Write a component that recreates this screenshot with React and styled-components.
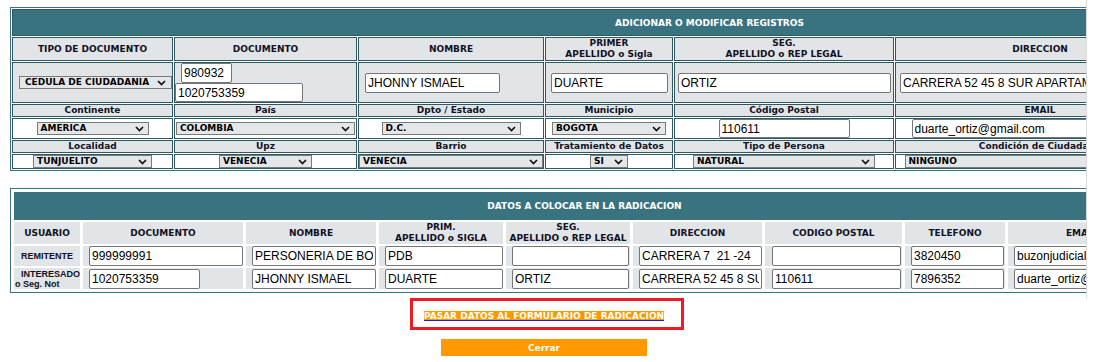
import React from 'react';
import styled, { createGlobalStyle } from 'styled-components';

const TEAL = '#3a7380';
const CELL_BORDER = '#2d5864';
const GRAY = '#e1e5e8';
const INK = '#111122';
const ORANGE = '#ff9900';

const GlobalStyle = createGlobalStyle`
  html, body { margin: 0; padding: 0; background: #fff; }
  body { font-family: "DejaVu Sans", Verdana, sans-serif; font-size: 9px; color: ${INK}; }
  * { box-sizing: border-box; }
`;

const Page = styled.div`
  width: 1094px;
  display: flex;
  flex-direction: column;
  align-items: center;
`;

const Viewport = styled.div`
  align-self: flex-start;
  width: 1087px;
  height: 298px;
  overflow: hidden;
  border-right: 1px solid #d9d9d9;
  padding: 7px 0 0 10px;
  display: flex;
  flex-direction: column;
  align-items: flex-start;
  gap: 17px;
`;

/* ---------- top table ---------- */
const RegistryGrid = styled.div`
  display: grid;
  flex-shrink: 0;
  grid-template-columns: 161px 183px 186px 128px 220px 290px 221px;
  grid-template-rows: 27px 24px 41px 13px 21px 13px 15px;
  gap: 1px;
  padding: 1px;
  border: 1px solid ${TEAL};
  background: #fff;
`;

const GridTitle = styled.div`
  grid-column: 1 / -1;
  background: ${TEAL};
  border: 1px solid ${CELL_BORDER};
  color: #fff;
  font-weight: bold;
  font-size: 9px;
  display: flex;
  align-items: center;
  justify-content: center;
  white-space: nowrap;
`;

const Cell = styled.div`
  border: 1px solid ${CELL_BORDER};
  background: ${p => (p.$white ? '#fff' : GRAY)};
  display: flex;
  align-items: center;
  justify-content: ${p => (p.$start ? 'flex-start' : 'center')};
  padding-left: ${p => p.$pl || 0}px;
  min-width: 0;
  overflow: hidden;
`;

const StackCell = styled(Cell)`
  flex-direction: column;
  align-items: flex-start;
  justify-content: center;
`;

const Label = styled.span`
  font-family: "DejaVu Sans", Verdana, sans-serif;
  font-weight: bold;
  font-size: 9px;
  line-height: 11px;
  text-align: center;
  color: ${INK};
  white-space: nowrap;
`;

const TextInput = styled.input.attrs({ type: 'text', readOnly: true })`
  width: ${p => p.$w}px;
  height: ${p => p.$h || 20}px;
  margin: 0 0 0 ${p => p.$ml || 0}px;
  border: 1px solid #767676;
  border-radius: 2px;
  padding: 1px 2px;
  font-family: "Liberation Sans", Arial, sans-serif;
  font-size: 12px;
  color: #000;
  background: #fff;
  flex-shrink: 0;
  outline: none;
`;

const SelectBox = styled.div`
  width: ${p => (p.$w ? `${p.$w}px` : '100%')};
  height: 13px;
  flex-shrink: 0;
  display: flex;
  align-items: center;
  justify-content: space-between;
  border: 1px solid #7a7a7a;
  background: #e4e7ea;
  padding: 0 ${p => p.$pr ?? 4}px 0 ${p => p.$pl ?? 3}px;
  font-family: "DejaVu Sans", Verdana, sans-serif;
  font-weight: bold;
  font-size: 9px;
  line-height: 11px;
  color: #000;
  white-space: nowrap;
  overflow: hidden;
`;

const Chevron = () => (
  <svg width="9" height="6" viewBox="0 0 9 6" style={{ flexShrink: 0 }}>
    <path d="M1 1 L4.5 4.5 L8 1" fill="none" stroke="#111" strokeWidth="1.7" />
  </svg>
);

const Select = ({ value, w, pl, pr }) => (
  <SelectBox $w={w} $pl={pl} $pr={pr}>
    <span>{value}</span>
    <Chevron />
  </SelectBox>
);

/* ---------- bottom table ---------- */
const RadGrid = styled.div`
  display: grid;
  flex-shrink: 0;
  grid-template-columns: 66px 160px 130px 124px 124px 129px 137px 100px 147px;
  grid-template-rows: 28px 22px 20px 21px;
  column-gap: 3px;
  row-gap: 2px;
  padding: 3px;
  border: 1px solid ${TEAL};
  background: #fff;
`;

const RadTitle = styled.div`
  grid-column: 1 / -1;
  background: ${TEAL};
  color: #fff;
  font-weight: bold;
  font-size: 9px;
  display: flex;
  align-items: center;
  justify-content: center;
  white-space: nowrap;
`;

const RadCell = styled.div`
  background: ${GRAY};
  display: flex;
  align-items: center;
  justify-content: ${p => (p.$start ? 'flex-start' : 'center')};
  padding-left: ${p => p.$pl || 0}px;
  min-width: 0;
`;

const UserLabel = styled.span`
  font-family: "Liberation Sans", Arial, sans-serif;
  font-weight: bold;
  font-size: 9px;
  line-height: 10px;
  color: ${INK};
  white-space: nowrap;
  text-align: ${p => p.$align || 'center'};
  align-self: ${p => (p.$align === 'left' ? 'center' : 'auto')};
  width: ${p => (p.$align === 'left' ? '100%' : 'auto')};
  padding-left: ${p => (p.$align === 'left' ? '1px' : '0')};
`;

const Indent = styled.span`
  padding-left: 6px;
`;

/* ---------- actions ---------- */
const ActionBox = styled.div`
  width: 274px;
  height: 32px;
  border: 3px solid #ed1c24;
  display: flex;
  align-items: center;
  justify-content: center;
  padding-top: 3px;
  padding-right: 6px;
`;

const PassLink = styled.a`
  font-family: "DejaVu Sans", Verdana, sans-serif;
  font-weight: bold;
  font-size: 9px;
  color: #fff;
  background: ${ORANGE};
  text-decoration: underline;
  text-decoration-color: #1a1aff;
  white-space: nowrap;
`;

const CloseButton = styled.button`
  width: 206px;
  height: 17px;
  margin: 9px 6px 0 0;
  border: none;
  background: ${ORANGE};
  color: #fff;
  font-family: "DejaVu Sans", Verdana, sans-serif;
  font-weight: bold;
  font-size: 9px;
  padding: 0;
`;

const twoLine = (a, b) => (
  <>
    {a}
    <br />
    {b}
  </>
);

export default function App() {
  const headers = [
    'TIPO DE DOCUMENTO',
    'DOCUMENTO',
    'NOMBRE',
    twoLine('PRIMER', 'APELLIDO o Sigla'),
    twoLine('SEG.', 'APELLIDO o REP LEGAL'),
    'DIRECCION',
    'TELEFONO',
  ];
  const labels1 = ['Continente', 'País', 'Dpto / Estado', 'Municipio', 'Código Postal', 'EMAIL', 'Celular'];
  const labels2 = [
    'Localidad',
    'Upz',
    'Barrio',
    'Tratamiento de Datos',
    'Tipo de Persona',
    'Condición de Ciudadano',
    'Discapacidad',
  ];

  const radHeaders = [
    'USUARIO',
    'DOCUMENTO',
    'NOMBRE',
    twoLine('PRIM.', 'APELLIDO o SIGLA'),
    twoLine('SEG.', 'APELLIDO o REP LEGAL'),
    'DIRECCION',
    'CODIGO POSTAL',
    'TELEFONO',
    'EMAIL',
  ];

  const remitente = [
    { v: '999999991', w: 154 },
    { v: 'PERSONERIA DE BOGOTA', w: 124 },
    { v: 'PDB', w: 118 },
    { v: '', w: 117 },
    { v: 'CARRERA 7  21 -24', w: 123 },
    { v: '', w: 129, pl: 7 },
    { v: '3820450', w: 93 },
    { v: 'buzonjudicial@personeriabogota.gov.co', w: 140 },
  ];
  const interesado = [
    { v: '1020753359', w: 111 },
    { v: 'JHONNY ISMAEL', w: 124 },
    { v: 'DUARTE', w: 118 },
    { v: 'ORTIZ', w: 117 },
    { v: 'CARRERA 52 45 8 SUR APARTAMENTO 301', w: 123 },
    { v: '110611', w: 129, pl: 7 },
    { v: '7896352', w: 93 },
    { v: 'duarte_ortiz@gmail.com', w: 140 },
  ];

  return (
    <>
      <GlobalStyle />
      <Page>
        <Viewport>
          <RegistryGrid>
            <GridTitle>ADICIONAR O MODIFICAR REGISTROS</GridTitle>

            {headers.map((h, i) => (
              <Cell key={`h${i}`}>
                <Label>{h}</Label>
              </Cell>
            ))}

            <Cell $start $pl={6}>
              <Select value="CEDULA DE CIUDADANIA" w={153} pl={5} pr={5} />
            </Cell>
            <StackCell>
              <TextInput $w={51} $h={20} $ml={6} value="980932" />
              <TextInput $w={128} $h={19} value="1020753359" />
            </StackCell>
            <Cell $start $pl={6}>
              <TextInput $w={135} value="JHONNY ISMAEL" />
            </Cell>
            <Cell $start $pl={5}>
              <TextInput $w={117} value="DUARTE" />
            </Cell>
            <Cell $start $pl={3}>
              <TextInput $w={213} value="ORTIZ" />
            </Cell>
            <Cell $start $pl={4}>
              <TextInput $w={280} value="CARRERA 52 45 8 SUR APARTAMENTO 301" />
            </Cell>
            <Cell $start $pl={4}>
              <TextInput $w={150} value="7896352" />
            </Cell>

            {labels1.map((l, i) => (
              <Cell key={`l1${i}`}>
                <Label>{l}</Label>
              </Cell>
            ))}

            <Cell $white>
              <Select value="AMERICA" w={112} />
            </Cell>
            <Cell $white>
              <Select value="COLOMBIA" w={179} />
            </Cell>
            <Cell $white>
              <Select value="D.C." w={139} />
            </Cell>
            <Cell $white>
              <Select value="BOGOTA" w={114} />
            </Cell>
            <Cell $white>
              <TextInput $w={131} $h={19} value="110611" />
            </Cell>
            <Cell $white>
              <TextInput $w={257} $h={19} value="duarte_ortiz@gmail.com" />
            </Cell>
            <Cell $white>
              <TextInput $w={150} $h={19} value="3115550000" />
            </Cell>

            {labels2.map((l, i) => (
              <Cell key={`l2${i}`}>
                <Label>{l}</Label>
              </Cell>
            ))}

            <Cell $white>
              <Select value="TUNJUELITO" w={119} />
            </Cell>
            <Cell $white>
              <Select value="VENECIA" w={93} />
            </Cell>
            <Cell $white>
              <Select value="VENECIA" />
            </Cell>
            <Cell $white>
              <Select value="SI" w={38} />
            </Cell>
            <Cell $white>
              <Select value="NATURAL" w={182} />
            </Cell>
            <Cell $white>
              <Select value="NINGUNO" w={271} />
            </Cell>
            <Cell $white>
              <Select value="NINGUNA" w={150} />
            </Cell>
          </RegistryGrid>

          <RadGrid>
            <RadTitle>DATOS A COLOCAR EN LA RADICACION</RadTitle>
            {radHeaders.map((h, i) => (
              <RadCell key={`rh${i}`}>
                <Label>{h}</Label>
              </RadCell>
            ))}

            <RadCell>
              <UserLabel>REMITENTE</UserLabel>
            </RadCell>
            {remitente.map((c, i) => (
              <RadCell key={`r${i}`} $start $pl={c.pl || 6}>
                <TextInput $w={c.w} value={c.v} />
              </RadCell>
            ))}

            <RadCell $start>
              <UserLabel $align="left">
                <Indent>INTERESADO</Indent>
                <br />o Seg. Not
              </UserLabel>
            </RadCell>
            {interesado.map((c, i) => (
              <RadCell key={`i${i}`} $start $pl={c.pl || 6}>
                <TextInput $w={c.w} value={c.v} />
              </RadCell>
            ))}
          </RadGrid>
        </Viewport>

        <ActionBox>
          <PassLink href="#">PASAR DATOS AL FORMULARIO DE RADICACION</PassLink>
        </ActionBox>
        <CloseButton type="button">Cerrar</CloseButton>
      </Page>
    </>
  );
}
